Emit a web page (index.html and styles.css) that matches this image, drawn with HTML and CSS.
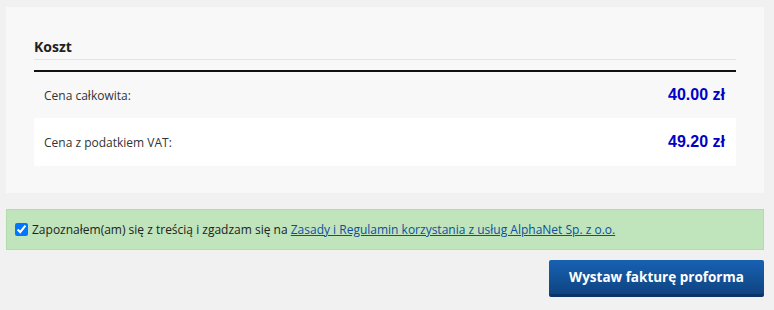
FILE: index.html
```html
<!DOCTYPE html>
<html lang="pl">
<head>
    <meta charset="UTF-8">
    <title>Koszt</title>
    <link rel="stylesheet" href="styles.css">
</head>
<body>
    <div class="page">
        <div class="panel">
            <h2 class="panel-title">Koszt</h2>
            <table class="cost-table">
                <tr class="row-odd">
                    <td class="label">Cena całkowita:</td>
                    <td class="price">40.00 zł</td>
                </tr>
                <tr class="row-even">
                    <td class="label">Cena z podatkiem VAT:</td>
                    <td class="price">49.20 zł</td>
                </tr>
            </table>
        </div>

        <div class="terms">
            <input type="checkbox" id="accept" checked>
            <label for="accept">Zapoznałem(am) się z treścią i zgadzam się na <a href="#">Zasady i Regulamin korzystania z usług AlphaNet Sp. z o.o.</a></label>
        </div>

        <div class="actions">
            <button type="button" class="submit-btn">Wystaw fakturę proforma</button>
        </div>
    </div>
</body>
</html>
```

FILE: styles.css
```css
* {
    margin: 0;
    padding: 0;
    box-sizing: border-box;
}

body {
    background-color: #f1f1f1;
    font-family: 'Open Sans', sans-serif;
    color: #333;
}

.page {
    padding: 7px 10px 0 6px;
}

.panel {
    background-color: #f8f8f8;
    padding: 30px 28px 27px 28px;
}

.panel-title {
    font-size: 14px;
    font-weight: bold;
    color: #222;
    line-height: 20px;
    padding-bottom: 2px;
    border-bottom: 1px solid #e3e3e3;
    margin-bottom: 10px;
}

.cost-table {
    width: 100%;
    border-collapse: collapse;
    border-top: 2px solid #111;
}

.cost-table td {
    height: 47px;
    vertical-align: middle;
}

.row-even td {
    background-color: #fff;
    height: 48px;
}

.label {
    font-size: 12px;
    padding-left: 10px;
    color: #333;
}

.price {
    text-align: right;
    padding-right: 11px;
    font-family: 'Liberation Sans', Arial, sans-serif;
    font-weight: bold;
    font-size: 16px;
    color: #0000c8;
}

.terms {
    margin-top: 16px;
    background-color: #c0e4bb;
    border: 1px solid #b3dbad;
    height: 41px;
    display: flex;
    align-items: center;
    padding-left: 8px;
    font-size: 12px;
    color: #222;
}

.terms input {
    width: 13px;
    height: 13px;
    margin: 0 4px 0 0;
}

.terms a {
    color: #0b4f9e;
}

.actions {
    display: flex;
    justify-content: flex-end;
    margin-top: 10px;
}

.submit-btn {
    width: 215px;
    height: 37px;
    border: none;
    border-bottom: 3px solid #0a3568;
    border-radius: 2px;
    background: linear-gradient(#1861b2, #0f4482);
    color: #fff;
    font-family: 'Open Sans', sans-serif;
    font-weight: bold;
    font-size: 13.5px;
    cursor: pointer;
}
```
